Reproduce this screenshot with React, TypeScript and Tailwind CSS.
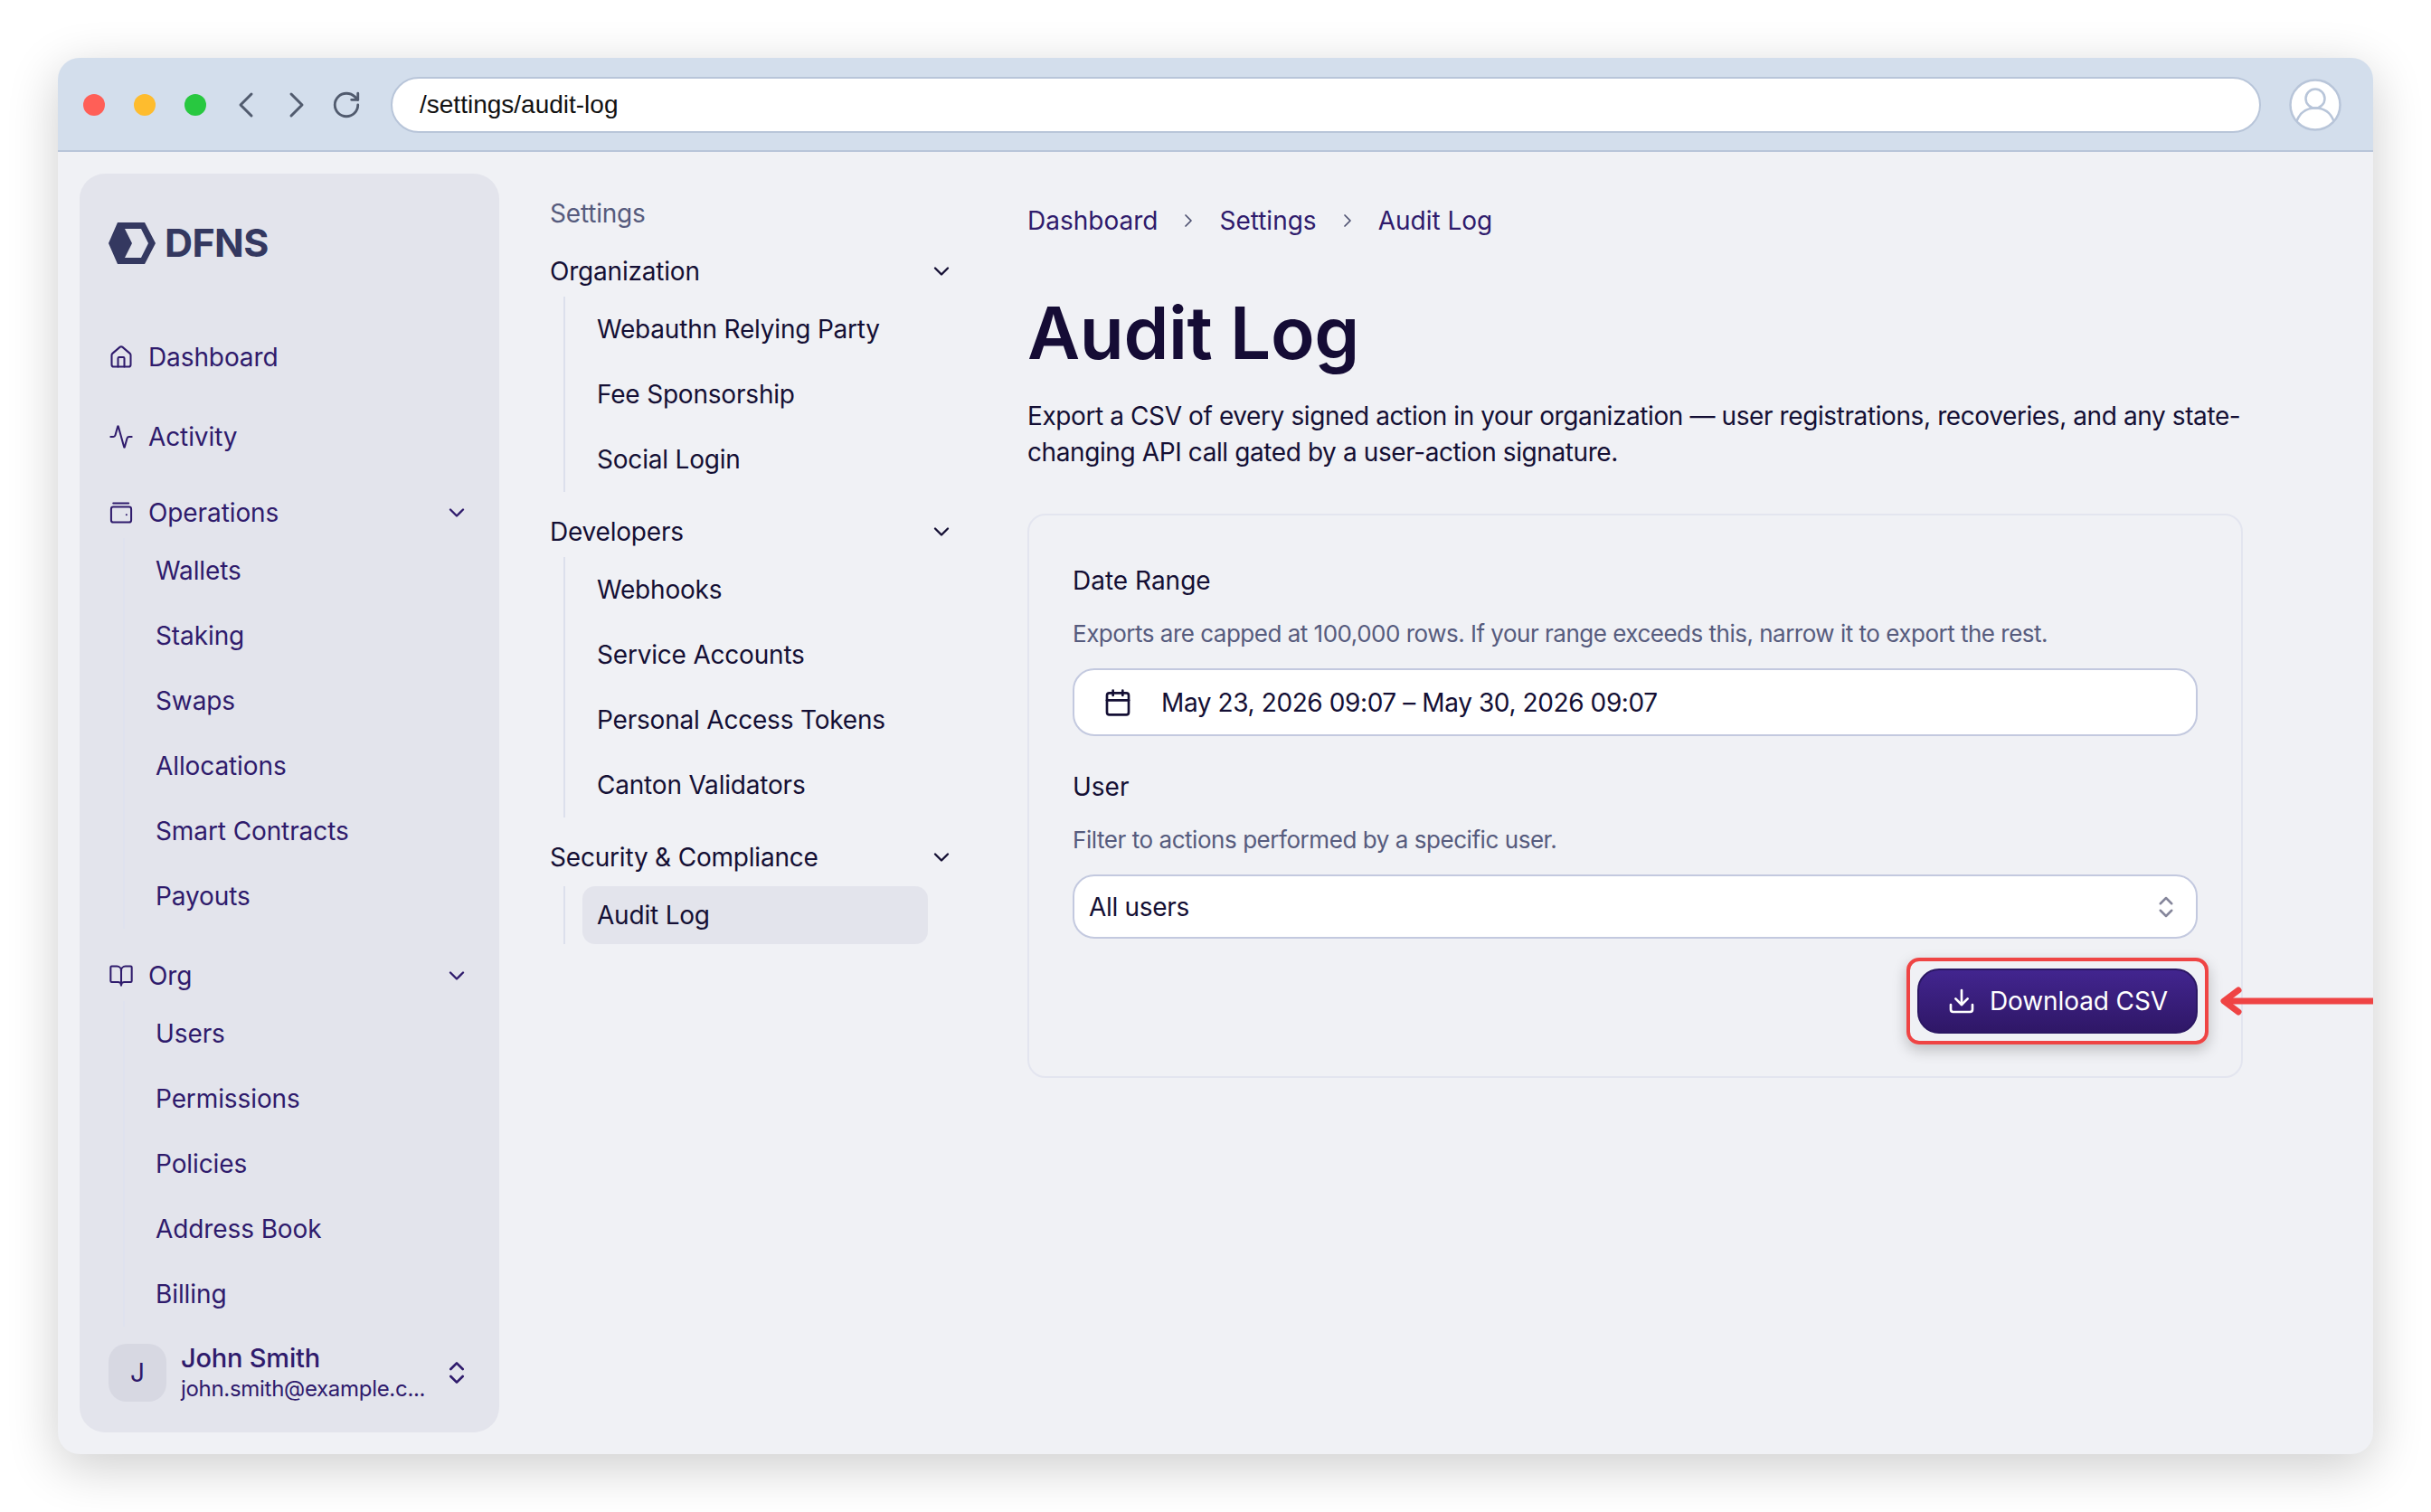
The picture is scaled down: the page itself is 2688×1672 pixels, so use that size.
import React from 'react';
import {
  Activity,
  BookOpen,
  Calendar,
  ChevronDown,
  ChevronLeft,
  ChevronRight,
  ChevronsUpDown,
  Download,
  House,
  RotateCw,
} from 'lucide-react';

const sections = [
  { title: 'Organization', items: ['Webauthn Relying Party', 'Fee Sponsorship', 'Social Login'] },
  { title: 'Developers', items: ['Webhooks', 'Service Accounts', 'Personal Access Tokens', 'Canton Validators'] },
  { title: 'Security & Compliance', items: ['Audit Log'] },
];

// Sidebar group with a collapsible header and an indented list
const SideGroup = ({ icon, title, items }: { icon: React.ReactNode; title: string; items: string[] }) => (
  <div>
    <div className="flex h-[56px] items-center">
      <span className="flex w-[44px] shrink-0 items-center">{icon}</span>
      <span>{title}</span>
      <ChevronDown size={28} strokeWidth={2} className="ml-auto mr-[1px]" />
    </div>
    <div className="ml-[16px] border-l-2 border-[#dfe2ee] pl-[34px]">
      {items.map((item) => (
        <div key={item} className="flex h-[72px] items-center">
          {item}
        </div>
      ))}
    </div>
  </div>
);

const BrowserBar = () => (
  <div className="flex h-[104px] shrink-0 items-center border-b-2 border-[#b8c5d9] bg-[#d3deec] pl-[28px] pr-[35px] pt-[2px]">
    <div className="flex gap-[32px]">
      <span className="h-[24px] w-[24px] rounded-full bg-[#ff5f57]" />
      <span className="h-[24px] w-[24px] rounded-full bg-[#febc2e]" />
      <span className="h-[24px] w-[24px] rounded-full bg-[#28c840]" />
    </div>
    <div className="ml-[20px] flex items-center text-[#515b6e]">
      <ChevronLeft size={48} strokeWidth={1.5} />
      <ChevronRight size={48} strokeWidth={1.5} className="ml-[8px]" />
      <RotateCw size={34} strokeWidth={2} className="ml-[14px]" />
    </div>
    <div className="ml-[32px] flex h-[62px] flex-1 items-center rounded-full border-2 border-[#b8c5d9] bg-white pl-[30px] font-['Liberation_Sans',sans-serif] text-[28px] text-[#111111]">
      /settings/audit-log
    </div>
    <svg viewBox="0 0 58 58" className="ml-[31px] h-[58px] w-[58px] shrink-0" fill="none" stroke="#b8c5d9" strokeWidth="2.5">
      <circle cx="29" cy="29" r="27.5" fill="#ffffff" />
      <circle cx="29" cy="22" r="10.5" />
      <path d="M8.5 47c3.5-9.5 11-14.500 20.500-14.500S46 37.500 49.500 47" />
    </svg>
  </div>
);

const Sidebar = () => (
  <aside className="flex w-[464px] shrink-0 flex-col rounded-[28px] bg-[#e3e4ec] px-[32px] pb-[32px] text-[28px] tracking-[-0.1px] text-[#2f1b6c]">
    <div className="mt-[54px] flex h-[46px] items-center text-[#343860]">
      <svg viewBox="0 0 52 46" className="h-[46px] w-[52px] shrink-0">
        <path
          fillRule="evenodd"
          fill="#343860"
          d="M10 0h30l12 23-12 23H10L0 23ZM18 7h18l8 16-8 16H18l8-16Z"
        />
      </svg>
      <span className="ml-[10px] mt-[-2px] text-[43px] font-bold tracking-[-0.6px]">DFNS</span>
    </div>
    <div className="mt-[71px] flex h-[64px] items-center">
      <span className="flex w-[44px] shrink-0 items-center">
        <House size={28} strokeWidth={1.75} />
      </span>
      Dashboard
    </div>
    <div className="mt-[24px] flex h-[64px] items-center">
      <span className="flex w-[44px] shrink-0 items-center">
        <Activity size={28} strokeWidth={1.75} />
      </span>
      Activity
    </div>
    <div className="mt-[24px]">
      <SideGroup
        icon={
          <svg viewBox="0 0 24 24" className="h-[28px] w-[28px]" fill="none" stroke="currentColor" strokeWidth="1.75" strokeLinecap="round" strokeLinejoin="round">
            <path d="M4.500 3h14.500" />
            <rect x="2.500" y="6.500" width="19" height="14.500" rx="2" />
            <path d="M17 14h.01" />
          </svg>
        }
        title="Operations"
        items={['Wallets', 'Staking', 'Swaps', 'Allocations', 'Smart Contracts', 'Payouts']}
      />
    </div>
    <div className="mt-[24px]">
      <SideGroup
        icon={<BookOpen size={28} strokeWidth={1.75} />}
        title="Org"
        items={['Users', 'Permissions', 'Policies', 'Address Book', 'Billing']}
      />
    </div>
    <div className="mt-auto flex items-center">
      <div className="flex h-[64px] w-[64px] shrink-0 items-center justify-center rounded-[20px] bg-[#d7d8e2] text-[28px]">
        J
      </div>
      <div className="ml-[16px] min-w-0 flex-1 whitespace-nowrap">
        <div className="text-[29px] font-medium leading-[36px] tracking-[-0.2px]">John Smith</div>
        <div className="text-[24px] leading-[32px] tracking-[-0.3px]">john.smith@example.c...</div>
      </div>
      <ChevronsUpDown size={32} strokeWidth={2} className="mr-[-1px] shrink-0" />
    </div>
  </aside>
);

const SettingsNav = () => (
  <nav className="ml-[56px] w-[448px] shrink-0 pt-[20px] text-[28px] tracking-[-0.2px] text-[#140f34]">
    <div className="mb-[12px] flex h-[48px] items-center text-[#565b7d]">Settings</div>
    {sections.map((section) => (
      <div key={section.title} className="mb-[16px]">
        <div className="flex h-[56px] items-center">
          <span>{section.title}</span>
          <ChevronDown size={28} strokeWidth={2} className="ml-auto mr-[1px]" />
        </div>
        <div className="ml-[15px] border-l-2 border-[#dce0ec] pl-[19px]">
          {section.items.map((item) =>
            item === 'Audit Log' ? (
              <div key={item} className="my-[4px] flex h-[64px] w-[382px] items-center rounded-[14px] bg-[#e3e4ec] pl-[16px]">
                {item}
              </div>
            ) : (
              <div key={item} className="flex h-[72px] items-center pl-[16px]">
                {item}
              </div>
            )
          )}
        </div>
      </div>
    ))}
  </nav>
);

const MainPanel = () => (
  <main className="ml-[80px] w-[1344px] shrink-0 pt-[32px] text-[28px] text-[#140f34]">
    <div className="flex h-[40px] items-center text-[#2f1b6c]">
      <span>Dashboard</span>
      <ChevronRight size={24} strokeWidth={1.75} className="mx-[22px] text-[#4d5070]" />
      <span>Settings</span>
      <ChevronRight size={24} strokeWidth={1.75} className="mx-[22px] text-[#4d5070]" />
      <span>Audit Log</span>
    </div>
    <h1 className="mt-[56px] text-[80px] font-semibold leading-[96px] tracking-[-0.4px] text-[#150c35]">Audit Log</h1>
    <p className="mt-[24px] leading-[40px] tracking-[-0.4px]">
      Export a CSV of every signed action in your organization — user registrations, recoveries, and any state-changing
      API call gated by a user-action signature.
    </p>
    <div className="mt-[48px] h-[624px] rounded-[20px] border-2 border-[#e3e5ef] px-[48px] pt-[52px]">
      <div className="h-[40px] leading-[40px]">Date Range</div>
      <div className="mt-[19px] h-[40px] text-[26px] leading-[40px] tracking-[-0.5px] text-[#565b7d]">
        Exports are capped at 100,000 rows. If your range exceeds this, narrow it to export the rest.
      </div>
      <div className="mt-[18px] flex h-[75px] items-center rounded-[24px] border-2 border-[#c3c9df] bg-white pl-[32px]">
        <Calendar size={32} strokeWidth={2} />
        <span className="ml-[32px] tracking-[-0.4px]">May 23, 2026 09:07 – May 30, 2026 09:07</span>
      </div>
      <div className="mt-[36px] h-[40px] leading-[40px]">User</div>
      <div className="mt-[19px] h-[40px] text-[26px] leading-[40px] tracking-[-0.45px] text-[#565b7d]">
        Filter to actions performed by a specific user.
      </div>
      <div className="mt-[18px] flex h-[71px] items-center rounded-[24px] border-2 border-[#c3c9df] bg-white pl-[16px] pr-[18px]">
        <span className="tracking-[-0.3px]">All users</span>
        <ChevronsUpDown size={30} strokeWidth={2} className="ml-auto text-[#85869b]" />
      </div>
      <div className="mt-[33px] flex justify-end">
        <div className="relative">
          <button className="flex h-[72px] w-[310px] items-center justify-center gap-[15px] rounded-[24px] border-2 border-[#2b1763] bg-gradient-to-b from-[#42258f] to-[#2f1767] tracking-[-0.1px] text-[#ffffff]">
            <Download size={32} strokeWidth={2} />
            Download CSV
          </button>
          {/* callout drawn over the screenshot */}
          <div className="absolute -inset-[12px] rounded-[14px] border-[4px] border-[#ef4444] shadow-[0_6px_16px_rgba(0,0,0,0.22)]" />
          <svg viewBox="0 0 168 40" className="absolute left-[334px] top-[16px] h-[40px] w-[170px]" fill="none" stroke="#ef4444" strokeWidth="7">
            <path d="M4 20H170" />
            <path strokeLinecap="round" strokeLinejoin="round" d="M20 8 4 20l16 12" />
          </svg>
        </div>
      </div>
    </div>
  </main>
);

export default function App() {
  return (
    <div className="h-[1672px] w-[2688px] overflow-hidden bg-white p-[64px] font-['Inter',sans-serif]">
      <div className="flex h-[1544px] w-[2560px] flex-col overflow-hidden rounded-[24px] bg-[#f0f1f5] shadow-[0_14px_56px_rgba(0,0,0,0.2)]">
        <BrowserBar />
        <div className="flex flex-1 p-[24px]">
          <Sidebar />
          <SettingsNav />
          <MainPanel />
        </div>
      </div>
    </div>
  );
}
